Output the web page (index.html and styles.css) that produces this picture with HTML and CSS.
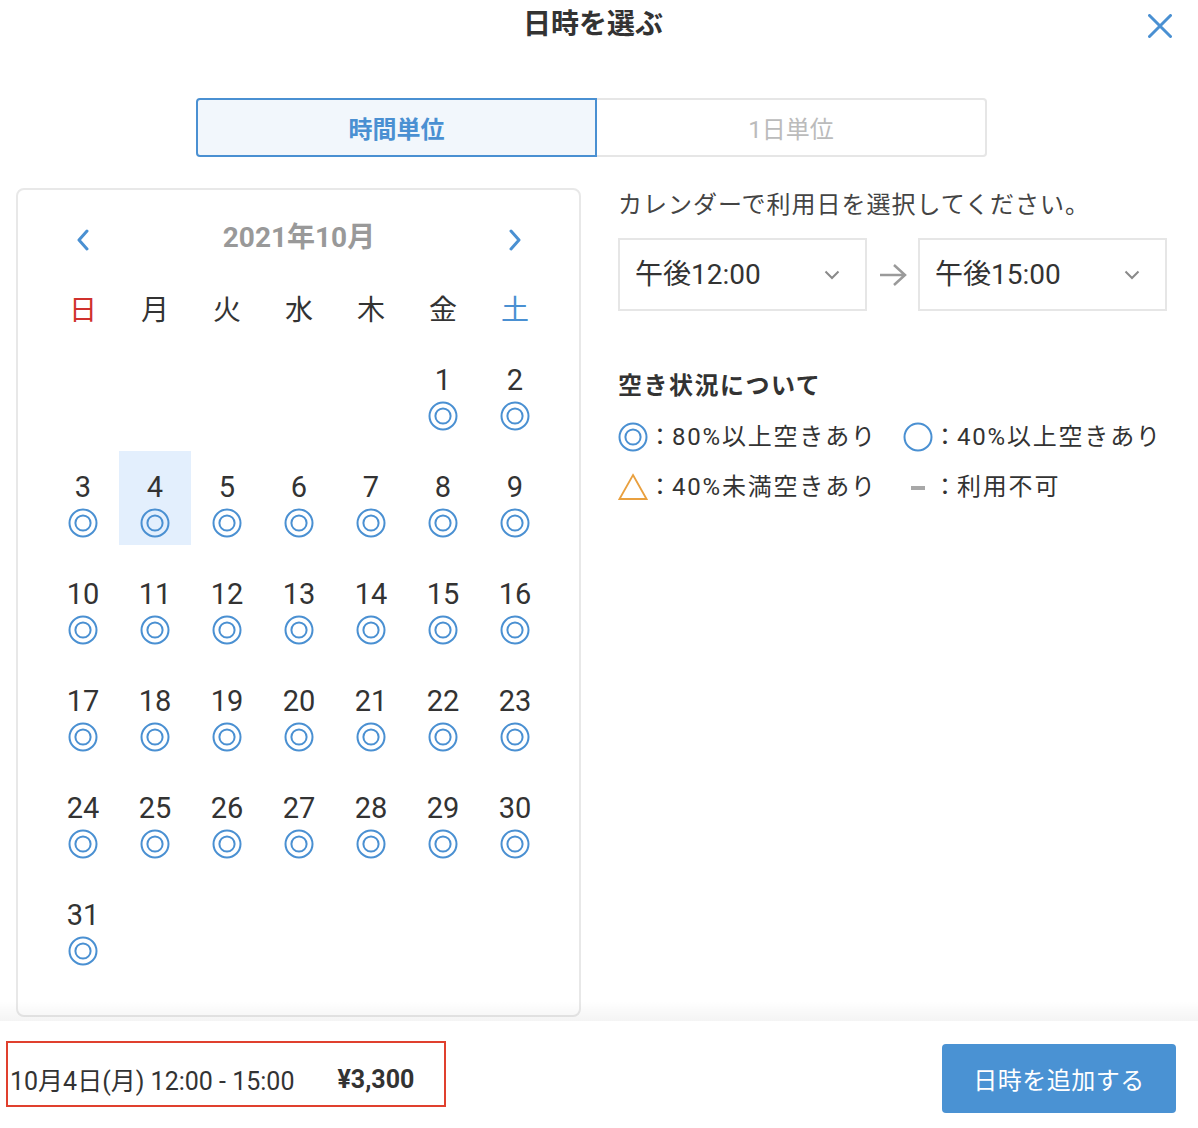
FILE: index.html
```html
<!DOCTYPE html>
<html lang="ja">
<head>
<meta charset="utf-8">
<title>日時を選ぶ</title>
<link rel="stylesheet" href="styles.css">
</head>
<body>
<svg width="0" height="0" class="defs">
  <defs>
    <symbol id="dbl" viewBox="0 0 30 30">
      <circle cx="15" cy="15" r="13.5" fill="none" stroke="#4a90d2" stroke-width="2"/>
      <circle cx="15" cy="15" r="7.6" fill="none" stroke="#4a90d2" stroke-width="2"/>
    </symbol>
  </defs>
</svg>
<div class="page">
  <header class="header">
    <h1 class="title">日時を選ぶ</h1>
    <button class="close" aria-label="閉じる">
      <svg width="24" height="24" viewBox="0 0 24 24"><path d="M1.5 1.5 L22.5 22.5 M22.5 1.5 L1.5 22.5" stroke="#4a90d2" stroke-width="3" stroke-linecap="round" fill="none"/></svg>
    </button>
  </header>

  <div class="tabs">
    <div class="tab tab-active">時間単位</div>
    <div class="tab tab-inactive">1日単位</div>
  </div>

  <main class="main">
    <section class="calendar">
      <div class="cal-head">
        <div class="nav"><svg width="14" height="22" viewBox="0 0 14 22"><path d="M11 2 L3 11 L11 20" stroke="#4a90d2" stroke-width="3" fill="none" stroke-linecap="round" stroke-linejoin="round"/></svg></div>
        <div class="month">2021年10月</div>
        <div class="nav"><svg width="14" height="22" viewBox="0 0 14 22"><path d="M3 2 L11 11 L3 20" stroke="#4a90d2" stroke-width="3" fill="none" stroke-linecap="round" stroke-linejoin="round"/></svg></div>
      </div>
      <div class="weekdays">
        <div class="wd sun">日</div><div class="wd">月</div><div class="wd">火</div><div class="wd">水</div><div class="wd">木</div><div class="wd">金</div><div class="wd sat">土</div>
      </div>
      <div class="dates">
        <div class="day empty"></div><div class="day empty"></div><div class="day empty"></div><div class="day empty"></div><div class="day empty"></div>
        <div class="day"><span class="num">1</span><svg class="mark"><use href="#dbl"/></svg></div>
        <div class="day"><span class="num">2</span><svg class="mark"><use href="#dbl"/></svg></div>
        <div class="day"><span class="num">3</span><svg class="mark"><use href="#dbl"/></svg></div>
        <div class="day selected"><span class="num">4</span><svg class="mark"><use href="#dbl"/></svg></div>
        <div class="day"><span class="num">5</span><svg class="mark"><use href="#dbl"/></svg></div>
        <div class="day"><span class="num">6</span><svg class="mark"><use href="#dbl"/></svg></div>
        <div class="day"><span class="num">7</span><svg class="mark"><use href="#dbl"/></svg></div>
        <div class="day"><span class="num">8</span><svg class="mark"><use href="#dbl"/></svg></div>
        <div class="day"><span class="num">9</span><svg class="mark"><use href="#dbl"/></svg></div>
        <div class="day"><span class="num">10</span><svg class="mark"><use href="#dbl"/></svg></div>
        <div class="day"><span class="num">11</span><svg class="mark"><use href="#dbl"/></svg></div>
        <div class="day"><span class="num">12</span><svg class="mark"><use href="#dbl"/></svg></div>
        <div class="day"><span class="num">13</span><svg class="mark"><use href="#dbl"/></svg></div>
        <div class="day"><span class="num">14</span><svg class="mark"><use href="#dbl"/></svg></div>
        <div class="day"><span class="num">15</span><svg class="mark"><use href="#dbl"/></svg></div>
        <div class="day"><span class="num">16</span><svg class="mark"><use href="#dbl"/></svg></div>
        <div class="day"><span class="num">17</span><svg class="mark"><use href="#dbl"/></svg></div>
        <div class="day"><span class="num">18</span><svg class="mark"><use href="#dbl"/></svg></div>
        <div class="day"><span class="num">19</span><svg class="mark"><use href="#dbl"/></svg></div>
        <div class="day"><span class="num">20</span><svg class="mark"><use href="#dbl"/></svg></div>
        <div class="day"><span class="num">21</span><svg class="mark"><use href="#dbl"/></svg></div>
        <div class="day"><span class="num">22</span><svg class="mark"><use href="#dbl"/></svg></div>
        <div class="day"><span class="num">23</span><svg class="mark"><use href="#dbl"/></svg></div>
        <div class="day"><span class="num">24</span><svg class="mark"><use href="#dbl"/></svg></div>
        <div class="day"><span class="num">25</span><svg class="mark"><use href="#dbl"/></svg></div>
        <div class="day"><span class="num">26</span><svg class="mark"><use href="#dbl"/></svg></div>
        <div class="day"><span class="num">27</span><svg class="mark"><use href="#dbl"/></svg></div>
        <div class="day"><span class="num">28</span><svg class="mark"><use href="#dbl"/></svg></div>
        <div class="day"><span class="num">29</span><svg class="mark"><use href="#dbl"/></svg></div>
        <div class="day"><span class="num">30</span><svg class="mark"><use href="#dbl"/></svg></div>
        <div class="day"><span class="num">31</span><svg class="mark"><use href="#dbl"/></svg></div>
      </div>
    </section>

    <section class="side">
      <p class="instr">カレンダーで利用日を選択してください。</p>
      <div class="time-row">
        <div class="select"><span>午後12:00</span><svg width="16" height="10" viewBox="0 0 16 10"><path d="M1.5 1.5 L8 8 L14.5 1.5" stroke="#8a8a8a" stroke-width="2" fill="none"/></svg></div>
        <div class="arrow"><svg width="28" height="24" viewBox="0 0 28 24"><path d="M1 12 H26 M15 2 L26 12 L15 22" stroke="#9a9a9a" stroke-width="2.5" fill="none"/></svg></div>
        <div class="select"><span>午後15:00</span><svg width="16" height="10" viewBox="0 0 16 10"><path d="M1.5 1.5 L8 8 L14.5 1.5" stroke="#8a8a8a" stroke-width="2" fill="none"/></svg></div>
      </div>

      <h2 class="legend-title">空き状況について</h2>
      <div class="legend">
        <div class="legend-item"><svg class="licon" viewBox="0 0 30 30"><use href="#dbl"/></svg><span class="colon">：</span><span class="ltext">80%以上空きあり</span></div>
        <div class="legend-item"><svg class="licon" viewBox="0 0 30 30"><circle cx="15" cy="15" r="13.5" fill="none" stroke="#4a90d2" stroke-width="2"/></svg><span class="colon">：</span><span class="ltext">40%以上空きあり</span></div>
        <div class="legend-item"><svg class="licon" viewBox="0 0 30 30"><path d="M15 3 L28.5 27 L1.5 27 Z" fill="none" stroke="#e9a03f" stroke-width="1.8" stroke-linejoin="miter"/></svg><span class="colon">：</span><span class="ltext">40%未満空きあり</span></div>
        <div class="legend-item"><svg class="licon" viewBox="0 0 30 30"><rect x="8" y="14" width="14" height="4" fill="#a8a8a8"/></svg><span class="colon">：</span><span class="ltext">利用不可</span></div>
      </div>
    </section>
  </main>

  <footer class="footer">
    <div class="summary"><span class="when">10月4日(月) 12:00 - 15:00</span><span class="price">¥3,300</span></div>
    <button class="add-btn">日時を追加する</button>
  </footer>
</div>
</body>
</html>
```

FILE: styles.css
```css
* {
  box-sizing: border-box;
  margin: 0;
  padding: 0;
}

body {
  margin: 0;
  font-family: Roboto, "Noto Sans CJK JP", sans-serif;
  color: #333;
  background: #fff;
}

.defs {
  position: absolute;
  width: 0;
  height: 0;
}

.page {
  width: 1198px;
  height: 1128px;
  display: flex;
  flex-direction: column;
  overflow: hidden;
}

/* Header */
.header {
  height: 50px;
  display: grid;
  grid-template-columns: 1fr auto 1fr;
  align-items: center;
  padding-right: 12px;
}

.title {
  grid-column: 2;
  font-size: 28px;
  font-weight: 700;
  line-height: 50px;
  color: #333;
}

.close {
  grid-column: 3;
  justify-self: end;
  margin-right: 14px;
  margin-top: 2px;
  width: 24px;
  height: 24px;
  border: none;
  background: none;
  display: flex;
}

/* Tabs */
.tabs {
  display: flex;
  margin-top: 48px;
  padding-left: 196px;
}

.tab {
  height: 59px;
  display: flex;
  align-items: center;
  justify-content: center;
  font-size: 24px;
}

.tab-active {
  width: 401px;
  background: #f2f7fc;
  border: 2px solid #4a90d2;
  border-radius: 4px 0 0 4px;
  color: #4a90d2;
  font-weight: 700;
}

.tab-inactive {
  width: 390px;
  border: 2px solid #e6e6e6;
  border-left: none;
  border-radius: 0 4px 4px 0;
  color: #bbb;
}

/* Main */
.main {
  display: flex;
  margin-top: 31px;
  padding-left: 16px;
}

.calendar {
  width: 565px;
  height: 829px;
  border: 2px solid #e8e8e8;
  border-radius: 8px;
  padding: 33px 28px 0 29px;
}

.cal-head {
  display: grid;
  grid-template-columns: 72px 1fr 72px;
  height: 30px;
  align-items: center;
}

.nav {
  display: flex;
  justify-content: center;
  padding-top: 3px;
}

.month {
  text-align: center;
  font-size: 28px;
  font-weight: 700;
  color: #999;
  line-height: 30px;
}

.weekdays {
  display: grid;
  grid-template-columns: repeat(7, 72px);
  margin-top: 43px;
}

.wd {
  text-align: center;
  font-size: 28px;
  line-height: 30px;
  color: #333;
}

.sun { color: #d0312d; }
.sat { color: #4a90d2; }

.dates {
  display: grid;
  grid-template-columns: repeat(7, 72px);
  grid-auto-rows: 94px;
  row-gap: 13px;
  margin-top: 18px;
}

.day {
  display: flex;
  flex-direction: column;
  align-items: center;
  padding-top: 21px;
}

.day.selected {
  background: #e3effd;
}

.num {
  font-size: 29px;
  line-height: 30px;
  color: #333;
}

.mark {
  margin-top: 6px;
  width: 30px;
  height: 30px;
}

/* Side panel */
.side {
  margin-left: 37px;
  width: 560px;
}

.instr {
  font-size: 24px;
  line-height: 34px;
  color: #444;
  letter-spacing: 1px;
}

.time-row {
  display: flex;
  align-items: center;
  margin-top: 16px;
}

.select {
  width: 249px;
  height: 73px;
  border: 2px solid #e6e6e6;
  display: flex;
  align-items: center;
  justify-content: space-between;
  padding: 0 25px 5px 15px;
  font-size: 28px;
  color: #333;
}

.select svg {
  margin-top: 5px;
}

.arrow {
  width: 51px;
  display: flex;
  justify-content: center;
}

.legend-title {
  margin-top: 58px;
  font-size: 24px;
  font-weight: 700;
  line-height: 34px;
  color: #333;
  letter-spacing: 1.5px;
}

.legend {
  display: grid;
  grid-template-columns: 285px auto;
  row-gap: 16px;
  margin-top: 17px;
}

.legend-item {
  display: flex;
  align-items: center;
  font-size: 24px;
  line-height: 34px;
  color: #333;
}

.licon {
  width: 30px;
  height: 30px;
  flex: none;
}

.colon {
  width: 24px;
  text-align: center;
}

.ltext {
  letter-spacing: 1.8px;
}

/* Footer */
.footer {
  margin-top: auto;
  height: 107px;
  position: relative;
  display: flex;
  justify-content: space-between;
  align-items: flex-start;
  padding: 20px 22px 0 6px;
  background: #fff;
}

.footer::before {
  content: "";
  position: absolute;
  left: 0;
  right: 0;
  top: -20px;
  height: 20px;
  background: linear-gradient(to bottom, rgba(0, 0, 0, 0), rgba(0, 0, 0, 0.045));
  pointer-events: none;
}

.summary {
  width: 440px;
  height: 66px;
  border: 2px solid #e0402e;
  display: flex;
  align-items: center;
  padding: 10px 0 0 2px;
  font-size: 25px;
  color: #333;
}

.price {
  margin-left: 43px;
  font-weight: 700;
}

.add-btn {
  margin-top: 3px;
  width: 234px;
  height: 69px;
  background: #4a92d3;
  color: #fff;
  border: none;
  border-radius: 4px;
  font-family: inherit;
  font-size: 24px;
  letter-spacing: 0.5px;
  display: flex;
  align-items: center;
  justify-content: center;
}
```
